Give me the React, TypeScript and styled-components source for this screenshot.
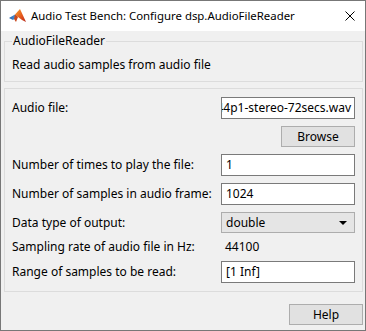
import React from 'react';
import styled, { createGlobalStyle } from 'styled-components';

const GlobalStyle = createGlobalStyle`
  * {
    box-sizing: border-box;
  }
  html, body {
    margin: 0;
    padding: 0;
    background: #ffffff;
  }
  body {
    font-family: 'Noto Sans', 'Liberation Sans', sans-serif;
    font-size: 12px;
    color: #000;
  }
`;

const Window = styled.div`
  width: 366px;
  height: 331px;
  border: 1px solid #777777;
  background: #f0f0f0;
  display: flex;
  flex-direction: column;
`

const TitleBar = styled.div`
  height: 30px;
  background: #ffffff;
  display: flex;
  align-items: center;
  padding-left: 8px;
  gap: 5px;
`

const Title = styled.span`
  flex: 1;
  font-size: 11.4px;
  line-height: 16px;
  white-space: nowrap;
`

const CloseButton = styled.div`
  width: 30px;
  height: 30px;
  display: flex;
  align-items: center;
  justify-content: center;
`

const Body = styled.div`
  flex: 1;
  display: flex;
  flex-direction: column;
  padding: 2px 2px 0 3px;
`

const GroupBox = styled.fieldset`
  margin: 0;
  padding: 0 7px 8px 7px;
  border: 1px solid #dcdcdc;
  min-width: 0;
`

const Legend = styled.legend`
  padding: 0 1px;
  line-height: 16px;
`

const Description = styled.div`
  padding-top: 8px;
  line-height: 16px;
`

const Panel = styled.div`
  margin-top: 6px;
  border: 1px solid #dcdcdc;
  padding: 8px 7px 8px 7px;
  display: grid;
  grid-template-columns: 1fr 134px;
  row-gap: 7px;
  align-items: center;
`

const Label = styled.div<{ $compact?: boolean }>`
  line-height: ${(p) => (p.$compact ? '14px' : '16px')};
  white-space: nowrap;
`

const Field = styled.div<{ $alignEnd?: boolean }>`
  height: 22px;
  background: #ffffff;
  border: 1px solid #7a7a7a;
  display: flex;
  align-items: center;
  justify-content: ${(p) => (p.$alignEnd ? 'flex-end' : 'flex-start')};
  padding: 0 3px 0 4px;
  overflow: hidden;
  white-space: nowrap;
  line-height: 16px;
`

const Value = styled.div`
  line-height: 14px;
  padding-left: 4px;
`

const Button = styled.div`
  width: 74px;
  height: 21px;
  background: #e1e1e1;
  border: 1px solid #adadad;
  display: flex;
  align-items: center;
  justify-content: center;
  line-height: 16px;
`

const ButtonCell = styled.div`
  grid-column: 2;
  display: flex;
  justify-content: flex-end;
`

const Select = styled.div`
  height: 21px;
  background: #e5e5e5;
  border: 1px solid #adadad;
  display: flex;
  align-items: center;
  justify-content: space-between;
  padding: 0 7px 0 4px;
  line-height: 16px;
`

const Caret = styled.span`
  width: 0;
  height: 0;
  border-left: 4px solid transparent;
  border-right: 4px solid transparent;
  border-top: 4px solid #000;
`

const Footer = styled.div`
  display: flex;
  justify-content: flex-end;
  padding-top: 12px;
`

function MatlabIcon() {
    return (
        <svg width="17" height="16" viewBox="0 0 17 16">
            <defs>
                <linearGradient id="peak" x1="0" y1="0" x2="1" y2="1">
                    <stop offset="0" stopColor="#f7a02a" />
                    <stop offset="0.6" stopColor="#e2531d" />
                    <stop offset="1" stopColor="#b3271a" />
                </linearGradient>
                <linearGradient id="wing" x1="0" y1="0" x2="1" y2="0">
                    <stop offset="0" stopColor="#1f5fae" />
                    <stop offset="1" stopColor="#5aa7e0" />
                </linearGradient>
            </defs>
            <polygon points="0,10 6,6.5 8.5,8.5 4,12" fill="url(#wing)" />
            <polygon points="6,6.5 11,1 17,14 13,12 9,9" fill="url(#peak)" />
            <polygon points="6,6.5 9,9 7,14 5,11" fill="#c8461c" />
        </svg>
    )
}

function CloseIcon() {
    return (
        <svg width="10" height="10" viewBox="0 0 10 10">
            <path d="M0.5 0.5 L9.5 9.5 M9.5 0.5 L0.5 9.5" stroke="#000" strokeWidth="1" />
        </svg>
    )
}

export default function App() {
    return (
        <>
            <GlobalStyle />
            <Window>
                <TitleBar>
                    <MatlabIcon />
                    <Title>Audio Test Bench: Configure dsp.AudioFileReader</Title>
                    <CloseButton>
                        <CloseIcon />
                    </CloseButton>
                </TitleBar>
                <Body>
                    <GroupBox>
                        <Legend>AudioFileReader</Legend>
                        <Description>Read audio samples from audio file</Description>
                    </GroupBox>
                    <Panel>
                        <Label>Audio file:</Label>
                        <Field $alignEnd>RockGuitar-16-44p1-stereo-72secs.wav</Field>
                        <ButtonCell>
                            <Button>Browse</Button>
                        </ButtonCell>
                        <Label>Number of times to play the file:</Label>
                        <Field>1</Field>
                        <Label>Number of samples in audio frame:</Label>
                        <Field>1024</Field>
                        <Label>Data type of output:</Label>
                        <Select>
                            <span>double</span>
                            <Caret />
                        </Select>
                        <Label $compact>Sampling rate of audio file in Hz:</Label>
                        <Value>44100</Value>
                        <Label>Range of samples to be read:</Label>
                        <Field>[1 Inf]</Field>
                    </Panel>
                    <Footer>
                        <Button>Help</Button>
                    </Footer>
                </Body>
            </Window>
        </>
    )
}
